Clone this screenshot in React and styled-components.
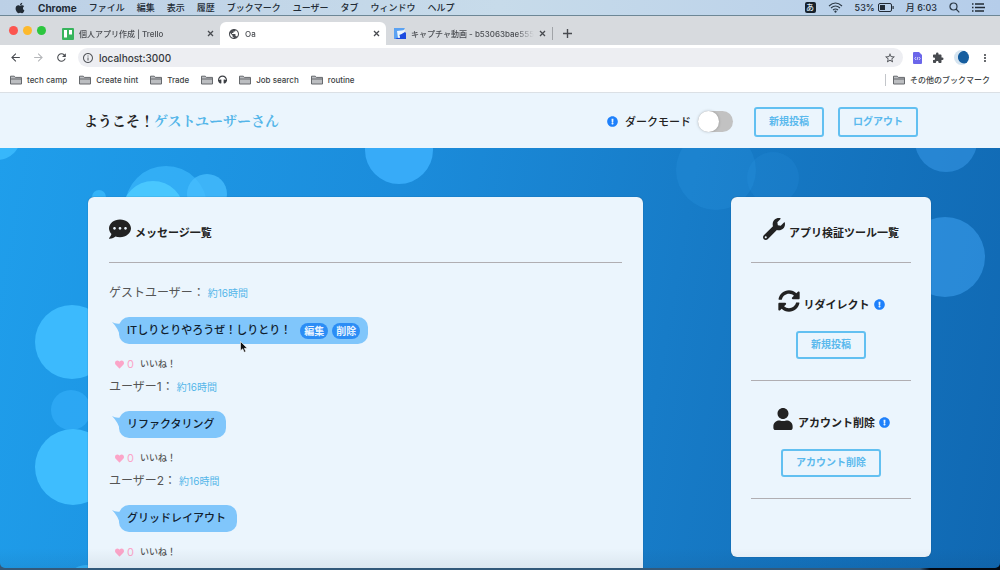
import React from "react";
import styled, { createGlobalStyle } from "styled-components";
import {
  FaApple,
  FaCommentDots,
  FaExclamationCircle,
  FaHeadphones,
  FaHeart,
  FaSyncAlt,
  FaUser,
  FaWrench,
} from "react-icons/fa";
import {
  MdArrowBack,
  MdArrowForward,
  MdExtension,
  MdInfoOutline,
  MdMoreVert,
  MdPublic,
  MdRefresh,
  MdStarBorder,
} from "react-icons/md";

const GlobalStyle = createGlobalStyle`
  * { box-sizing: border-box; }
  html, body, #root { height: 100%; }
  body {
    margin: 0;
    overflow: hidden;
    font-family: Inter, "Noto Sans CJK JP", sans-serif;
    color: #222;
  }
  button, input { font: inherit; color: inherit; margin: 0; }
  h1, h2, p, ul { margin: 0; padding: 0; font: inherit; }
  svg { display: block; flex: none; }
`;

const Screen = styled.div`
  height: 100%;
  display: flex;
  flex-direction: column;
  background: linear-gradient(90deg, #33597a 92%, #020913 93%);
  padding-bottom: 2px;
`;

/* ---- system menu bar ---- */

const MenuBar = styled.nav`
  flex: none;
  height: 16px;
  padding: 0 15px 0 14px;
  display: flex;
  align-items: center;
  justify-content: space-between;
  background: linear-gradient(90deg, #bcd0e6, #c7dbea 50%, #b5cdea);
  border-bottom: 1px solid #6d8796;
  font-size: 9px;
  font-weight: 500;
  line-height: 14px;
  white-space: nowrap;
  color: #222b35;
`;

const MenuGroup = styled.div`
  display: flex;
  align-items: center;
  gap: 12px;
`;

const MenuItem = styled.button`
  padding: 0;
  border: 0;
  background: none;
  line-height: 14px;
  font-size: ${(p) => (p.$app ? 10 : 9)}px;
  font-weight: ${(p) => (p.$app ? 700 : 500)};
`;

const Battery = styled.span`
  display: flex;
  align-items: center;
  gap: 3px;
`;

const ImeBadge = styled.span`
  width: 11px;
  height: 11px;
  border-radius: 2px;
  background: #17212b;
  color: #dfeaf5;
  font-size: 8px;
  line-height: 10px;
  text-align: center;
`;

/* ---- browser window ---- */

const Window = styled.div`
  flex: 1;
  min-height: 0;
  display: flex;
  flex-direction: column;
  overflow: hidden;
  border-radius: 0 0 5px 5px;
`;

const TabStrip = styled.div`
  flex: none;
  height: 29px;
  display: flex;
  align-items: flex-end;
  background: #d7dade;
`;

const Lights = styled.div`
  display: flex;
  align-items: center;
  gap: 5px;
  height: 29px;
  width: 54px;
  padding-left: 9px;
`;

const Light = styled.span`
  width: 9px;
  height: 9px;
  border-radius: 50%;
  background: ${(p) => p.$color};
`;

const Tab = styled.div`
  height: 23px;
  width: 166px;
  padding: 0 6px 0 8px;
  display: flex;
  align-items: center;
  gap: 5px;
  border-radius: 6px 6px 0 0;
  background: ${(p) => (p.$active ? "#fff" : "transparent")};
  color: #4a4d52;
`;

const TabTitle = styled.button`
  flex: 1;
  min-width: 0;
  padding: 0;
  border: 0;
  background: none;
  text-align: left;
  font-size: 8px;
  font-weight: 500;
  line-height: 14px;
  white-space: nowrap;
  overflow: hidden;
  mask-image: linear-gradient(90deg, #000 85%, transparent);
`;

const IconButton = styled.button`
  padding: 0;
  border: 0;
  background: none;
  display: flex;
  color: ${(p) => (p.$muted ? "#b4b6b9" : "#484b50")};
`;

const NewTab = styled.div`
  height: 23px;
  display: flex;
  align-items: center;
  gap: 10px;

  &::before {
    content: "";
    width: 1px;
    height: 13px;
    background: #a1a4a8;
  }
`;

const Toolbar = styled.div`
  flex: none;
  height: 25px;
  padding: 0 9px;
  display: flex;
  align-items: center;
  gap: 10px;
  background: #fff;
`;

const Omnibox = styled.div`
  flex: 1;
  height: 19px;
  padding: 0 7px 0 4px;
  display: flex;
  align-items: center;
  gap: 5px;
  border-radius: 10px;
  background: #edeef2;
  color: #55585d;
`;

const Address = styled.input`
  flex: 1;
  min-width: 0;
  padding: 0;
  border: 0;
  outline: 0;
  background: none;
  font-size: 10px;
  font-weight: 500;
  line-height: 16px;
  color: #36393d;
`;

const Profile = styled.span`
  width: 15px;
  height: 15px;
  border-radius: 50%;
  background: radial-gradient(circle at 68% 48%, #155d9f 45%, #d5e4f0 52%);
`;

const Bookmarks = styled.div`
  flex: none;
  height: 23px;
  padding: 0 10px 3px;
  display: flex;
  align-items: center;
  gap: 12px;
  background: #fff;
  border-bottom: 1px solid #dbe0e5;
`;

const Bookmark = styled.a`
  display: flex;
  align-items: center;
  gap: 5px;
  font-size: 8px;
  font-weight: 500;
  line-height: 12px;
  text-decoration: none;
  white-space: nowrap;
  color: #3c3f44;
  ${(p) =>
    p.$end &&
    `
    margin-left: auto;
    padding-left: 7px;
    border-left: 1px solid #c3c6ca;
  `}
`;

/* ---- site header ---- */

const Header = styled.header`
  flex: none;
  height: 55px;
  padding: 2px 82px 0 84px;
  display: flex;
  align-items: center;
  justify-content: space-between;
  background: #ebf5fd;
  white-space: nowrap;
`;

const Welcome = styled.h1`
  padding-bottom: 4px;
  font-family: "Noto Serif CJK JP", "Noto Sans CJK JP", serif;
  font-size: 14px;
  font-weight: 700;
  line-height: 20px;
`;

const UserName = styled.span`
  color: #54b5e9;
`;

const Actions = styled.div`
  display: flex;
  align-items: center;
  gap: 14px;
`;

const ModeLabel = styled.label`
  display: flex;
  align-items: center;
  gap: 7px;
  margin-right: 7px;
  font-size: 11px;
  font-weight: 500;
  line-height: 16px;
`;

const Toggle = styled.input`
  appearance: none;
  width: 35px;
  height: 21px;
  border-radius: 11px;
  background: #c2c2c2;

  &::before {
    content: "";
    display: block;
    width: 21px;
    height: 21px;
    border-radius: 50%;
    background: #fff;
    box-shadow: 0 0 3px rgba(0, 0, 0, 0.25);
  }

  &:checked::before {
    margin-left: 14px;
  }
`;

const InfoIcon = styled(FaExclamationCircle)`
  width: 11px;
  height: 11px;
  color: #1e80fb;
`;

const OutlineButton = styled.button`
  height: ${(p) => (p.$tall ? 30 : 28)}px;
  padding: 0 13px 2px;
  border: 2px solid #62c0f1;
  border-radius: 3px;
  background: none;
  color: #5ab9ed;
  font-size: 10px;
  font-weight: 700;
  line-height: 16px;
`;

/* ---- page body ---- */

const Main = styled.main`
  position: relative;
  flex: 1;
  min-height: 0;
  padding: 49px 69px 0 88px;
  display: flex;
  align-items: flex-start;
  gap: 88px;
  overflow: hidden;
  background: linear-gradient(100deg, #1f9eeb 0%, #1b8cdb 38%, #177cc8 65%, #1068b2 100%);
`;

const Bubbles = styled.svg`
  position: absolute;
  inset: 0;
  width: 100%;
  height: 100%;
`;

const Card = styled.section`
  position: relative;
  background: #ebf5fd;
  border-radius: 6px;
  box-shadow: 0 0 1px rgba(20, 60, 90, 0.8);
`;

const MessageCard = styled(Card)`
  flex: 1;
  padding: 21px 21px 40px;
`;

const ToolCard = styled(Card)`
  width: 200px;
  padding: 21px 20px 58px;
  display: flex;
  flex-direction: column;
  align-items: center;
`;

const Title = styled.h2`
  height: 23px;
  display: flex;
  align-items: flex-end;
  gap: 4px;
  font-size: 11px;
  font-weight: 700;
  line-height: 16px;
  white-space: nowrap;

  & > svg:first-child {
    align-self: flex-start;
  }

  & > ${InfoIcon} {
    margin-bottom: 3px;
  }
`;

const Divider = styled.hr`
  width: 100%;
  height: 1px;
  margin: 21px 0 0;
  border: 0;
  background: #b0aeb2;
`;

const Tool = styled.div`
  width: 100%;
  padding-top: 27px;
  display: flex;
  flex-direction: column;
  align-items: center;
`;

const ToolButton = styled(OutlineButton)`
  margin-top: 18px;
`;

const MessageList = styled.ul`
  padding-top: 22px;
  list-style: none;
`;

const Message = styled.li`
  height: 94px;
  display: flex;
  flex-direction: column;
  align-items: flex-start;
  white-space: nowrap;
`;

const Author = styled.p`
  display: flex;
  align-items: center;
  gap: 3px;
  font-size: 12px;
  line-height: 16px;
  color: #555;
`;

const Time = styled.time`
  font-size: 10px;
  color: #54b5e9;
`;

const Speech = styled.div`
  position: relative;
  height: 27px;
  margin: 16px 0 14px 10px;
  padding: 0 8px 2px;
  display: flex;
  align-items: center;
  gap: 4px;
  border-radius: 10px;
  background: #80c6fb;
  font-size: 11px;
  font-weight: 500;
  line-height: 16px;
  color: #10202e;
`;

const Tail = styled.svg`
  position: absolute;
  left: -7px;
  top: 5px;
`;

const SpeechText = styled.p`
  margin-right: ${(p) => (p.$wide ? 5 : 3)}px;
`;

const Pill = styled.button`
  height: 16px;
  margin-top: 2px;
  padding: 0 4px;
  border: 0;
  border-radius: 8px;
  background: #2b8df5;
  color: #e9f4ff;
  font-size: 10px;
  font-weight: 700;
  line-height: 14px;
`;

const Like = styled.button`
  margin-left: 6px;
  padding: 0;
  border: 0;
  background: none;
  height: 12px;
  display: flex;
  align-items: center;
  gap: 3px;
  font-size: 9px;
  font-weight: 500;
  line-height: 12px;
  color: #555;
`;

const LikeCount = styled.span`
  margin-right: 3px;
  font-size: 11px;
  font-weight: 400;
  color: #fba5c8;
`;

const BottomShade = styled.div`
  position: absolute;
  inset: auto 0 0;
  height: 20px;
  background: linear-gradient(transparent, rgba(20, 40, 60, 0.07));
  pointer-events: none;
`;

const Pointer = styled.svg`
  position: absolute;
  left: 240px;
  top: 193px;
`;

const CloseIcon = () => (
  <svg width="7" height="7" viewBox="0 0 7 7" stroke="currentColor" strokeWidth="1.3">
    <path d="M1 1l5 5M6 1l-5 5" />
  </svg>
);

const FolderIcon = () => (
  <svg width="12" height="10" viewBox="0 0 12 10" fill="#bcbec1" stroke="#66696d">
    <path d="M.5 9V1.2h3.8l1 1.2h6.2V9z" />
    <path d="M.5 4h11" />
  </svg>
);

const TrelloIcon = () => (
  <svg width="12" height="12" viewBox="0 0 12 12">
    <rect width="12" height="12" rx="1" fill="#37b45c" />
    <path d="M2 2h3v7.5H2zM7 2h3v4.5H7z" fill="#fff" />
  </svg>
);

const CaptureIcon = () => (
  <svg width="12" height="12" viewBox="0 0 12 12">
    <path d="M0 0h11l-7 11H0z" fill="#5ba2f2" />
    <path d="M3 3l8-1-1 3-5 2 1 2-2 1z" fill="#eef6ff" />
    <path d="M1 11l2-1h3V7l5-3 1 1v6z" fill="#1d4be0" />
  </svg>
);

const WifiIcon = () => (
  <svg width="15" height="11" viewBox="0 0 15 11" fill="none" stroke="#2b3845" strokeWidth="1.1">
    <path d="M1 4q6.500-6 13 0M3 6q4.500-4 9 0M5 8q2.500-2 5 0" />
    <circle cx="7.500" cy="9.600" r=".6" fill="#2b3845" />
  </svg>
);

const BatteryIcon = () => (
  <svg width="16" height="9" viewBox="0 0 16 9">
    <rect x=".5" y=".5" width="13" height="8" rx="1.500" fill="none" stroke="#222b35" />
    <path d="M2 2h5v5H2zM14.500 3h1.200v3h-1.200z" fill="#222b35" />
  </svg>
);

const SearchIcon = () => (
  <svg width="11" height="11" viewBox="0 0 11 11" fill="none" stroke="#2b3845" strokeWidth="1.200">
    <circle cx="4.500" cy="4.500" r="3.500" />
    <path d="M7 7l3.300 3.300" />
  </svg>
);

const ListIcon = () => (
  <svg width="13" height="9" viewBox="0 0 13 9" stroke="#222b35" strokeWidth="1.400">
    <path d="M0 1h1.500M3 1h9M0 4.500h1.500M3 4.500h10M0 8h1.500M3 8h9" />
  </svg>
);

const ExtensionIcon = () => (
  <svg width="9" height="12" viewBox="0 0 9 12">
    <path d="M0 1q0-1 1-1h5l3 3v8q0 1-1 1H1q-1 0-1-1z" fill="#6b66ea" />
    <path d="M3 5L1.800 6.500 3 8M6 5l1.200 1.500L6 8M4.900 5l-.8 3" fill="none" stroke="#fff" strokeWidth=".7" />
  </svg>
);

const menus = ["ファイル", "編集", "表示", "履歴", "ブックマーク", "ユーザー", "タブ", "ウィンドウ", "ヘルプ"];

const folders = ["tech camp", "Create hint", "Trade", null, "Job search", "routine"];

const messages = [
  { author: "ゲストユーザー", text: "ITしりとりやろうぜ！しりとり！", own: true },
  { author: "ユーザー1", text: "リファクタリング" },
  { author: "ユーザー2", text: "グリッドレイアウト" },
];

const circles = [
  [-3, -12, 24, "#3dbdff", 0.8],
  [99, 49, 7, "#3dbdff", 0.7],
  [166, 59, 41, "#3dbafd", 0.65],
  [153, 64, 31, "#4bcaff", 0.9],
  [207, 46, 20, "#48bfff", 0.75],
  [399, 2, 34, "#3fb3ff", 0.8],
  [72, 194, 37, "#3fbeff", 0.9],
  [71, 262, 20, "#36b0fb", 0.6],
  [73, 319, 38, "#40bfff", 0.95],
  [86, 437, 20, "#3fbeff", 0.7],
  [716, 22, 40, "#2a97e4", 0.25],
  [773, 30, 26, "#2a97e4", 0.18],
  [946, -7, 31, "#3899e8", 0.55],
  [945, 109, 40, "#3899e8", 0.65],
];

export default function App() {
  return (
    <Screen>
      <GlobalStyle />
      <MenuBar>
        <MenuGroup>
          <FaApple size={12} />
          <MenuItem $app>Chrome</MenuItem>
          {menus.map((m) => (
            <MenuItem key={m}>{m}</MenuItem>
          ))}
        </MenuGroup>
        <MenuGroup>
          <ImeBadge>あ</ImeBadge>
          <WifiIcon />
          <Battery>
            53% <BatteryIcon />
          </Battery>
          <MenuItem>月 6:03</MenuItem>
          <SearchIcon />
          <ListIcon />
        </MenuGroup>
      </MenuBar>

      <Window>
        <TabStrip>
          <Lights>
            <Light $color="#fc5650" />
            <Light $color="#fdb92c" />
            <Light $color="#2cc63f" />
          </Lights>
          <Tab>
            <TrelloIcon />
            <TabTitle>個人アプリ作成 | Trello</TabTitle>
            <IconButton aria-label="タブを閉じる"><CloseIcon /></IconButton>
          </Tab>
          <Tab $active>
            <MdPublic size={12} />
            <TabTitle>Oa</TabTitle>
            <IconButton aria-label="タブを閉じる"><CloseIcon /></IconButton>
          </Tab>
          <Tab>
            <CaptureIcon />
            <TabTitle>キャプチャ動画 - b53063bae555</TabTitle>
            <IconButton aria-label="タブを閉じる"><CloseIcon /></IconButton>
          </Tab>
          <NewTab>
            <IconButton aria-label="新しいタブ">
              <svg width="9" height="9" viewBox="0 0 9 9" stroke="currentColor" strokeWidth="1.400">
                <path d="M4.500 0v9M0 4.500h9" />
              </svg>
            </IconButton>
          </NewTab>
        </TabStrip>

        <Toolbar>
          <IconButton aria-label="戻る"><MdArrowBack size={13} /></IconButton>
          <IconButton aria-label="進む" $muted><MdArrowForward size={13} /></IconButton>
          <IconButton aria-label="再読み込み"><MdRefresh size={13} /></IconButton>
          <Omnibox>
            <MdInfoOutline size={12} />
            <Address aria-label="アドレス" defaultValue="localhost:3000" />
            <IconButton aria-label="ブックマークに追加"><MdStarBorder size={12} /></IconButton>
          </Omnibox>
          <ExtensionIcon />
          <IconButton aria-label="拡張機能"><MdExtension size={12} /></IconButton>
          <Profile />
          <IconButton aria-label="メニュー"><MdMoreVert size={12} /></IconButton>
        </Toolbar>

        <Bookmarks>
          {folders.map((name, i) => (
            <Bookmark href="#" key={i}>
              <FolderIcon />
              {name || <FaHeadphones size={9} />}
            </Bookmark>
          ))}
          <Bookmark href="#" $end>
            <FolderIcon />
            その他のブックマーク
          </Bookmark>
        </Bookmarks>

        <Header>
          <Welcome>
            ようこそ！<UserName>ゲストユーザーさん</UserName>
          </Welcome>
          <Actions>
            <ModeLabel>
              <InfoIcon />
              ダークモード
              <Toggle type="checkbox" />
            </ModeLabel>
            <OutlineButton $tall>新規投稿</OutlineButton>
            <OutlineButton $tall>ログアウト</OutlineButton>
          </Actions>
        </Header>

        <Main>
          <Bubbles viewBox="0 0 1000 420" preserveAspectRatio="xMidYMin slice" aria-hidden="true">
            {circles.map(([cx, cy, r, fill, opacity]) => (
              <circle key={`${cx}-${cy}`} cx={cx} cy={cy} r={r} fill={fill} opacity={opacity} />
            ))}
          </Bubbles>

          <MessageCard>
            <Title>
              <FaCommentDots size={22} />
              メッセージ一覧
            </Title>
            <Divider />
            <MessageList>
              {messages.map((m) => (
                <Message key={m.author}>
                  <Author>
                    <span>{m.author}：</span>
                    <Time>約16時間</Time>
                  </Author>
                  <Speech>
                    <Tail width="12" height="14" viewBox="0 0 12 14">
                      <path d="M0 0Q4 3 12 1L8 14Q6 6 0 0z" fill="#80c6fb" />
                    </Tail>
                    <SpeechText $wide={m.own}>{m.text}</SpeechText>
                    {m.own && <Pill>編集</Pill>}
                    {m.own && <Pill>削除</Pill>}
                  </Speech>
                  <Like>
                    <FaHeart size={9} color="#fba5c8" />
                    <LikeCount>0</LikeCount>
                    いいね！
                  </Like>
                </Message>
              ))}
            </MessageList>
          </MessageCard>

          <ToolCard>
            <Title>
              <FaWrench size={22} />
              アプリ検証ツール一覧
            </Title>
            <Divider />
            <Tool>
              <Title>
                <FaSyncAlt size={22} />
                リダイレクト
                <InfoIcon />
              </Title>
              <ToolButton>新規投稿</ToolButton>
              <Divider />
            </Tool>
            <Tool>
              <Title>
                <FaUser size={22} />
                アカウント削除
                <InfoIcon />
              </Title>
              <ToolButton>アカウント削除</ToolButton>
              <Divider />
            </Tool>
          </ToolCard>

          <BottomShade />
          <Pointer width="8" height="12" viewBox="0 0 8 12">
            <path d="M.5.5v9.300l2.200-2 1.500 3.500 1.600-.7-1.500-3.300h3z" fill="#111" stroke="#fff" strokeWidth=".6" />
          </Pointer>
        </Main>
      </Window>
    </Screen>
  );
}
